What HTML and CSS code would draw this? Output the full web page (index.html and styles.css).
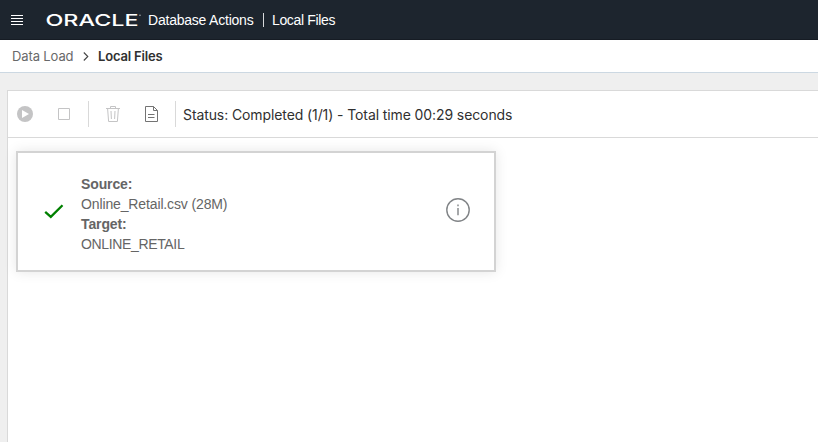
FILE: index.html
```html
<!DOCTYPE html>
<html lang="en">
<head>
<meta charset="utf-8">
<title>Local Files</title>
<link rel="stylesheet" href="styles.css">
</head>
<body>
<header class="topbar">
  <svg class="menu" width="12" height="11" viewBox="0 0 12 11"><path d="M0 .5h12M0 3.5h12M0 6.5h12M0 9.5h12" stroke="#fff"/></svg>
  <svg class="logo" width="98" height="26" viewBox="0 0 98 26" aria-label="Oracle">
    <text class="wordmark" x="-.5" y="19" textLength="93" lengthAdjust="spacingAndGlyphs">ORACLE</text>
    <circle cx="94" cy="8.2" r=".8" fill="#a5a9ad"/>
  </svg>
  <span class="product">Database Actions</span>
  <span class="divider"></span>
  <span class="section">Local Files</span>
</header>
<nav class="breadcrumb">
  <span class="parent">Data Load</span>
  <svg class="chevron" width="6" height="9" viewBox="0 0 6 9"><path d="M.8.5 4.8 4.5.8 8.5" fill="none" stroke="#444" stroke-width="1.1"/></svg>
  <span class="current">Local Files</span>
</nav>
<main class="panel">
  <div class="toolbar">
    <svg class="play" width="16" height="16" viewBox="0 0 16 16"><circle cx="8" cy="8" r="8" fill="#c4c4c5"/><path d="M5 4v8l7-4z" fill="#fff"/></svg>
    <svg class="stop" width="12" height="12" viewBox="0 0 12 12"><path d="M.5.5h11v11H.5z" fill="none" stroke="#c4c4c5"/></svg>
    <span class="rule"></span>
    <svg class="trash" width="14" height="16" viewBox="0 0 14 16"><path d="M0 2.5h14M4.5 2V.5h5V2M1.6 2.5l1 13h8.8l1-13M5 5l.4 8M9 5l-.4 8" fill="none" stroke="#c4c4c5"/></svg>
    <svg class="doc" width="13" height="16" viewBox="0 0 13 16"><path d="M.5.5h8l4 4v11H.5zM8.5.5v4h4M3 8.5h6.5M3 11.5h6.5" fill="none" stroke="#737373"/></svg>
    <span class="rule rule-end"></span>
    <span class="status">Status: Completed (1/1) - Total time 00:29 seconds</span>
  </div>
  <section class="card">
    <svg class="check" width="20" height="16" viewBox="0 0 20 16"><path d="M1.2 7.8 6.8 12.8 18.5 1.2" fill="none" stroke="#008000" stroke-width="2.3"/></svg>
    <dl class="details">
      <dt>Source:</dt><dd class="file">Online_Retail.csv (28M)</dd>
      <dt>Target:</dt><dd class="table">ONLINE_RETAIL</dd>
    </dl>
    <svg class="info" width="24" height="24" viewBox="0 0 24 24"><circle cx="12" cy="12" r="11.2" fill="none" stroke="#818487" stroke-width="1.4"/><path d="M12 10v7.2M12 6.5v1.7" stroke="#818487" stroke-width="1.4"/></svg>
  </section>
</main>
</body>
</html>
```
FILE: styles.css
```css
* { box-sizing: border-box; }
body {
  margin: 0;
  height: 442px;
  display: flex;
  flex-direction: column;
  overflow: hidden;
  background: #efefef;
  font-family: Inter, "Liberation Sans", sans-serif;
}
svg { display: block; flex: none; }
span { white-space: nowrap; }
.topbar {
  height: 40px;
  flex: none;
  display: flex;
  align-items: center;
  padding-left: 11px;
  background: #1d252e;
  border-bottom: 1px solid #161c24;
  color: #fff;
  font: 14px "Liberation Sans", sans-serif;
}
.menu { margin-top: 2px; }
.logo { margin-left: 23px; }
.wordmark { font: 450 16.5px Inter, sans-serif; fill: #fff; }
.product { width: 106px; margin-left: 4px; letter-spacing: -.22px; }
.divider { width: 1px; height: 14px; margin: 0 8px 0 9px; background: #d8dadc; }
.section { letter-spacing: -.35px; }
.breadcrumb {
  height: 33px;
  flex: none;
  display: flex;
  align-items: center;
  padding-left: 12px;
  background: #fff;
  border-bottom: 1px solid #ccd8e2;
  font-size: 13px;
}
.parent { width: 62px; color: #68696a; letter-spacing: -.12px; }
.chevron { margin: 0 9px; }
.current { color: #303030; font-weight: 600; letter-spacing: -.17px; }
.panel {
  flex: 1;
  margin: 17px 0 0 7px;
  background: #fff;
  border: solid #d9d9d9;
  border-width: 1px 0 0 1px;
}
.toolbar {
  height: 47px;
  display: flex;
  align-items: center;
  padding-left: 9px;
  border-bottom: 1px solid #d9d9d9;
}
.stop { margin-left: 25px; }
.rule { width: 1px; height: 26px; margin-left: 18px; background: #d9d9d9; }
.trash { margin-left: 17px; }
.doc { margin-left: 25px; }
.rule-end { margin-left: 17px; }
.status { margin-left: 7px; color: #303030; font-size: 14px; letter-spacing: -.1px; }
.card {
  width: 480px;
  height: 121px;
  margin: 13px 0 0 8px;
  display: flex;
  align-items: center;
  padding: 0 24px 0 26px;
  border: 2px solid #d3d3d3;
  box-shadow: 0 0 12px rgba(0, 0, 0, .1);
}
.details {
  margin: 4px 0 0 17px;
  flex: 1;
  color: #656565;
  font: 14px/20px "Liberation Sans", sans-serif;
}
dt { font-weight: 700; letter-spacing: -.12px; }
dd { margin: 0; }
.file { letter-spacing: -.13px; }
.table { letter-spacing: -.35px; }
.info { margin-top: -3px; }
```
